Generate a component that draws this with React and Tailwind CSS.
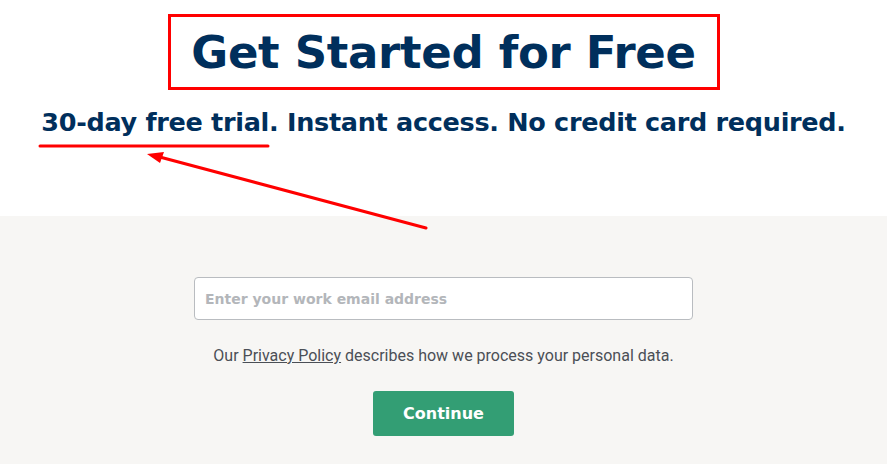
import React from 'react';

const App = () => {
  return (
    <div className="relative min-h-screen flex flex-col bg-[#f7f6f4]" style={{ fontFamily: '"DejaVu Sans", sans-serif' }}>
      {/* Hero */}
      <div className="bg-white h-[216px] flex flex-col items-center">
        <div className="mt-[14px] w-[552px] h-[76px] border-[3px] border-[#ff0000] flex items-center justify-center">
          <h1 className="text-[45px] font-bold text-[#002f5c] leading-none tracking-[-0.3px]">Get Started for Free</h1>
        </div>
        <p className="mt-[20px] text-[25.5px] font-bold text-[#002f5c] leading-none tracking-[-0.3px] whitespace-nowrap">
          30-day free trial. Instant access. No credit card required.
        </p>
      </div>

      {/* Form */}
      <div className="flex-1 flex flex-col items-center pt-[61px]">
        <input
          type="email"
          placeholder="Enter your work email address"
          className="w-[499px] h-[43px] bg-white border border-[#b9bcc0] rounded-[4px] px-[10px] text-[14px] font-bold placeholder:text-[#b3b6ba] outline-none"
        />
        <p className="mt-[24px] text-[16px] text-[#4b4f56]" style={{ fontFamily: 'Roboto, sans-serif' }}>
          Our <a href="#" className="underline">Privacy Policy</a> describes how we process your personal data.
        </p>
        <button className="mt-[23px] w-[141px] h-[45px] bg-[#339e74] rounded-[3px] text-white text-[16px] font-bold">
          Continue
        </button>
      </div>

      {/* Annotation overlay */}
      <svg className="absolute left-0 top-0 pointer-events-none" width="887" height="240" viewBox="0 0 887 240">
        <line x1="40" y1="146" x2="268" y2="146" stroke="#ff0000" strokeWidth="3" strokeLinecap="round" />
        <line x1="426" y1="228" x2="156" y2="156" stroke="#ff0000" strokeWidth="3" strokeLinecap="round" />
        <polygon points="147,154 164,152 160,163" fill="#ff0000" />
      </svg>
    </div>
  );
};

export default App;
